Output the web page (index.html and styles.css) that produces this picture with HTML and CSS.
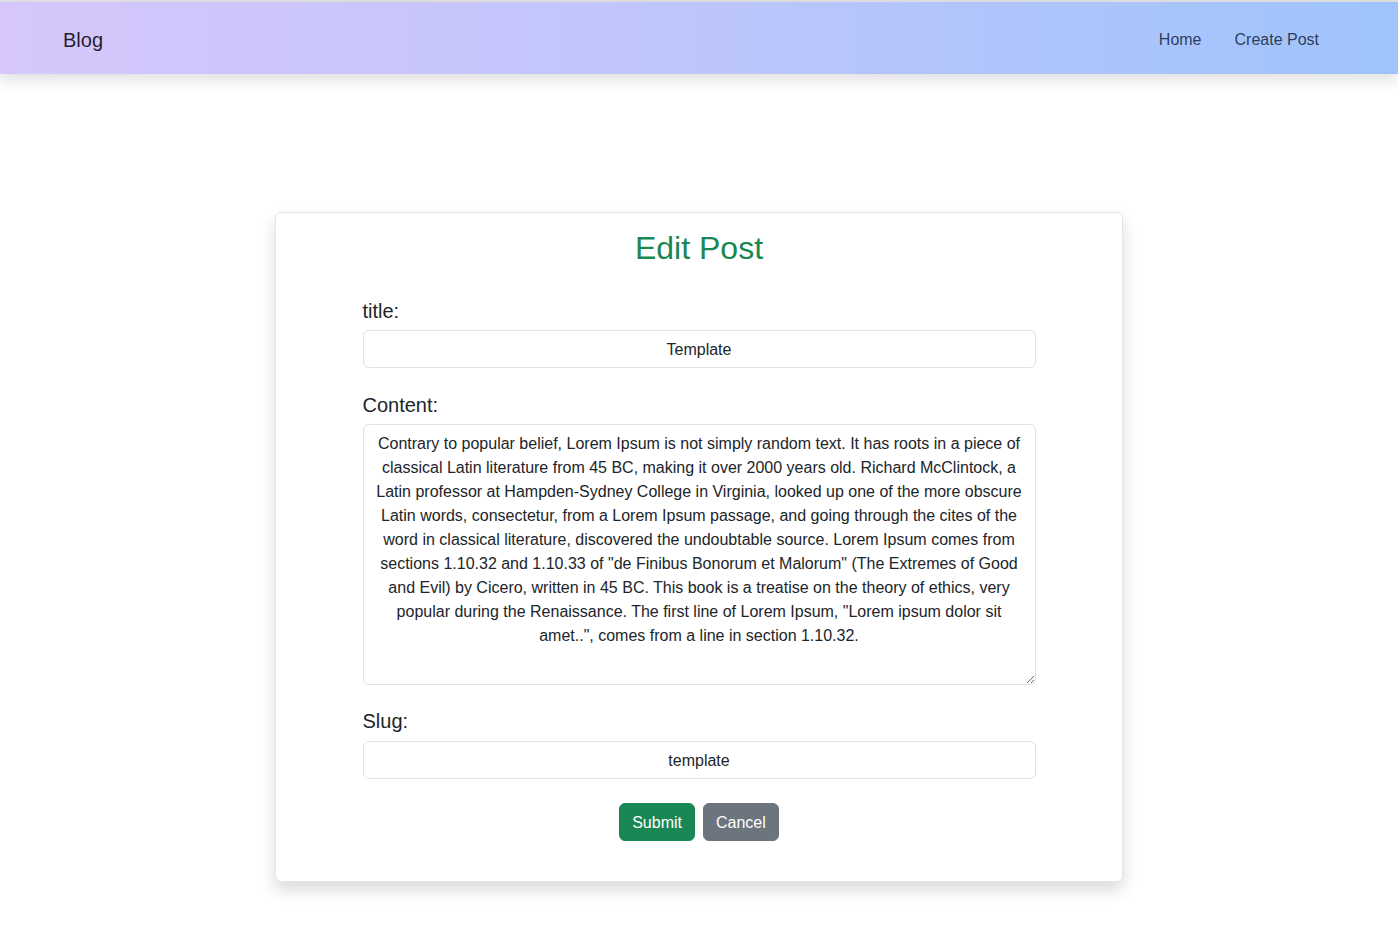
FILE: index.html
```html
<!DOCTYPE html>
<html lang="en">
<head>
<meta charset="utf-8">
<title>Edit Post</title>
<link rel="stylesheet" href="styles.css">
</head>
<body>
<div class="topline"></div>
<nav class="navbar">
  <a class="brand" href="#">Blog</a>
  <ul class="nav">
    <li><a class="nav-link" href="#">Home</a></li>
    <li><a class="nav-link" href="#">Create Post</a></li>
  </ul>
</nav>
<main class="main">
  <div class="card">
    <h2 class="card-title">Edit Post</h2>
    <form class="form">
      <div class="group">
        <label class="label" for="title">title:</label>
        <input class="control" id="title" type="text" value="Template">
      </div>
      <div class="group">
        <label class="label" for="content">Content:</label>
        <textarea class="control area" id="content">Contrary to popular belief, Lorem Ipsum is not simply random text. It has roots in a piece of classical Latin literature from 45 BC, making it over 2000 years old. Richard McClintock, a Latin professor at Hampden-Sydney College in Virginia, looked up one of the more obscure Latin words, consectetur, from a Lorem Ipsum passage, and going through the cites of the word in classical literature, discovered the undoubtable source. Lorem Ipsum comes from sections 1.10.32 and 1.10.33 of "de Finibus Bonorum et Malorum" (The Extremes of Good and Evil) by Cicero, written in 45 BC. This book is a treatise on the theory of ethics, very popular during the Renaissance. The first line of Lorem Ipsum, "Lorem ipsum dolor sit amet..", comes from a line in section 1.10.32.</textarea>
      </div>
      <div class="group">
        <label class="label" for="slug">Slug:</label>
        <input class="control" id="slug" type="text" value="template">
      </div>
      <div class="actions">
        <button class="btn btn-success" type="submit">Submit</button>
        <button class="btn btn-secondary" type="button">Cancel</button>
      </div>
    </form>
  </div>
</main>
</body>
</html>
```

FILE: styles.css
```css
* { box-sizing: border-box; }
html, body { margin: 0; padding: 0; }
body {
  font-family: "Liberation Sans", Arial, sans-serif;
  font-size: 16px;
  line-height: 1.5;
  color: #212529;
  background: #fff;
}
.topline { height: 2px; background: #e2e2e4; }
.navbar {
  height: 72px;
  display: flex;
  align-items: center;
  justify-content: space-between;
  padding: 4px 71px 0 63px;
  background: linear-gradient(90deg, #d6c6fb 0%, #c3c6fb 40%, #9ec4fb 100%);
  box-shadow: 0 6px 14px rgba(0, 0, 0, 0.13);
  position: relative;
}
.brand {
  font-size: 20px;
  color: rgba(0, 0, 0, 0.85);
  text-decoration: none;
  line-height: 30px;
}
.nav {
  display: flex;
  list-style: none;
  margin: 0;
  padding: 0;
  gap: 17px;
}
.nav-link {
  display: block;
  padding: 8px;
  color: rgba(10, 20, 50, 0.8);
  text-decoration: none;
}
.main {
  padding-top: 138px;
  padding-bottom: 40px;
  display: flex;
  justify-content: center;
}
.card {
  width: 848px;
  border: 1px solid #e3e5e8;
  border-radius: 6px;
  background: #fff;
  box-shadow: 0 8px 16px rgba(0, 0, 0, 0.15);
  padding: 16px 0 16px;
}
.card-title {
  margin: 0;
  font-size: 32px;
  font-weight: 400;
  line-height: 1.2;
  color: #198754;
  text-align: center;
}
.form {
  width: 673px;
  margin: 29px auto 0;
}
.group { margin-bottom: 22px; }
.group:nth-child(2) { margin-bottom: 21px; }
.label {
  display: block;
  font-size: 20px;
  line-height: 30px;
  margin-bottom: 4px;
}
.group:nth-child(3) .label { margin-bottom: 5px; }
.control {
  display: block;
  width: 100%;
  height: 38px;
  padding: 7px 12px 5px;
  font-family: inherit;
  font-size: 16px;
  line-height: 24px;
  color: #212529;
  text-align: center;
  border: 1px solid #dee2e6;
  border-radius: 6px;
  background: #fff;
}
.area {
  height: 261px;
  resize: vertical;
}
.actions {
  display: flex;
  justify-content: center;
  gap: 8px;
  margin-top: 24px;
  margin-bottom: 24px;
}
.btn {
  font-family: inherit;
  font-size: 16px;
  line-height: 24px;
  padding: 7px 12px 5px;
  border-radius: 6px;
  border: 1px solid transparent;
  color: #fff;
  cursor: pointer;
}
.btn-success { background: #198754; border-color: #198754; }
.btn-secondary { background: #6c757d; border-color: #6c757d; }
```
